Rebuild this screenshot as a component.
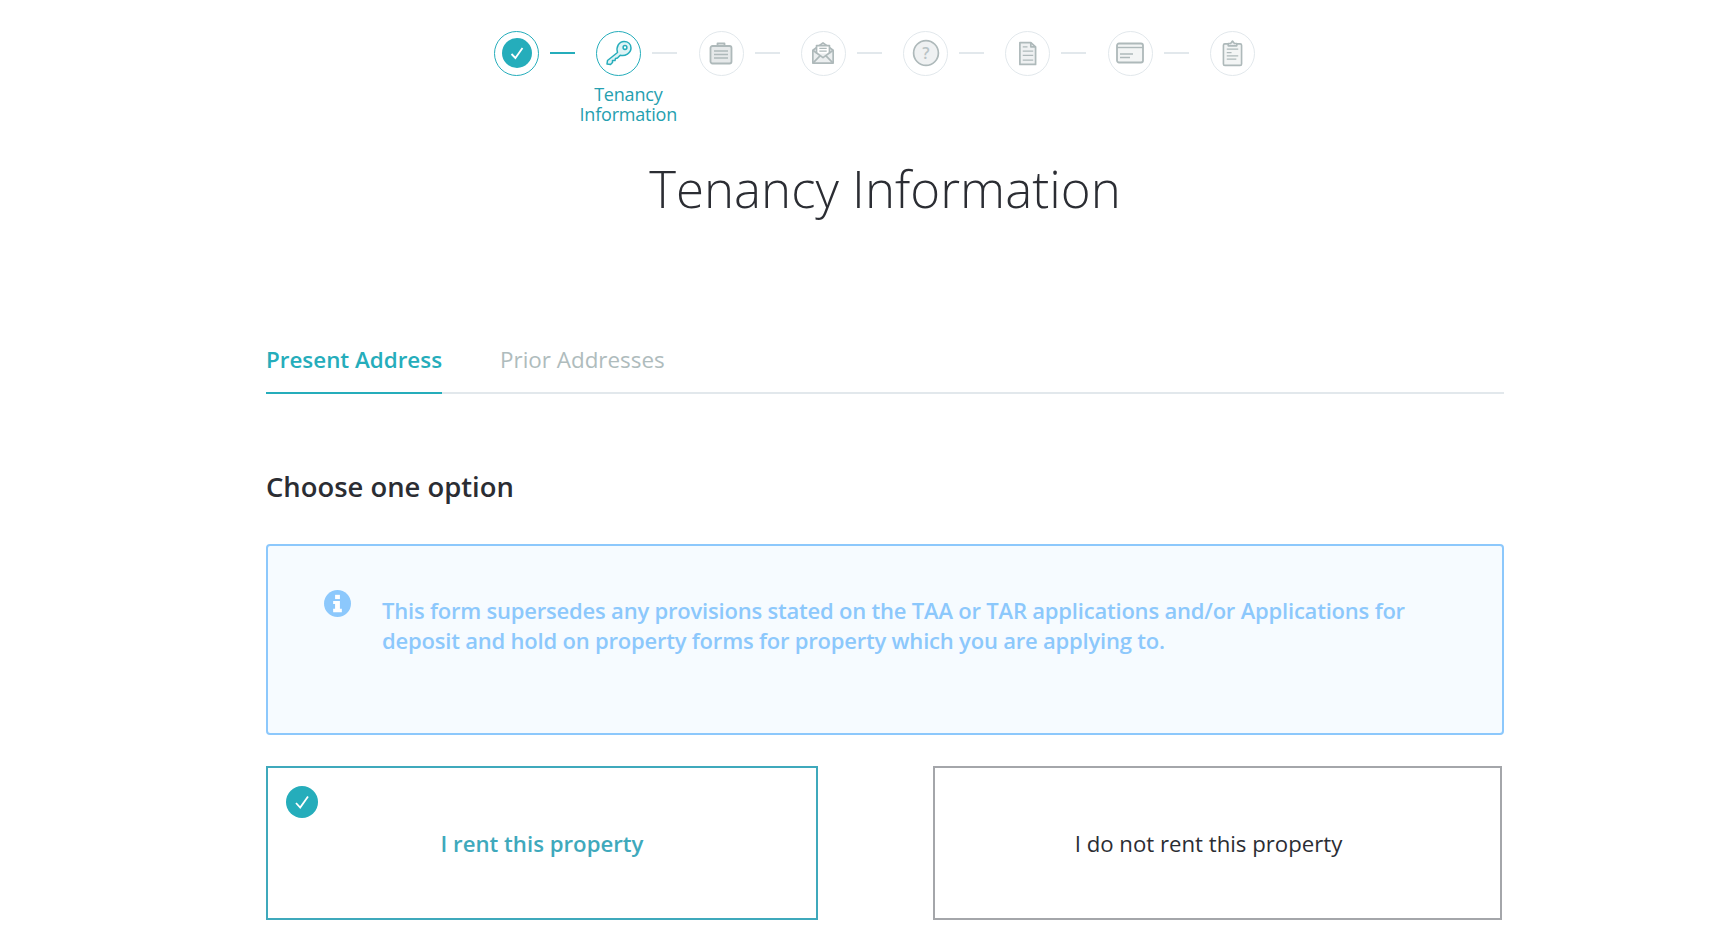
<div class="page">
  <nav class="stepper">
    <div class="step">
      <span class="circle done"><span class="dot">
        <svg viewBox="0 0 30 30" width="30" height="30"><path d="M9.5 16 L13.4 20 L20.5 10" fill="none" stroke="#fff" stroke-width="1.8"/></svg>
      </span></span>
      <span class="line on"></span>
    </div>
    <div class="step">
      <span class="circle active">
        <svg viewBox="0 0 28 28" width="28" height="28" fill="#dff3f5" stroke="#25adbb" stroke-width="1.5" stroke-linejoin="round">
          <path d="M12.5 13.5 L2.5 21.5 L2 25 L5.5 25.5 L7.5 23.5 L7.5 21.5 L10 21.5 L10.5 19.5 L12.5 19 L15.2 16.2 C20 17.8 26 14 26 9 C26 5 23 2.5 19 2.5 C14 2.5 10.8 8 12.5 13.5 Z"/>
          <circle cx="20" cy="8.5" r="1.9" fill="#fff"/>
        </svg>
      </span>
      <span class="line"></span>
      <span class="label">Tenancy<br />Information</span>
    </div>
    <div class="step">
      <span class="circle">
        <svg viewBox="0 0 24 24" width="24" height="24" fill="#e6e9ea" stroke="#aeb9ba" stroke-width="1.8" stroke-linejoin="round">
          <path d="M8.5 5 V2.5 H15.5 V5" fill="none"/>
          <rect x="1.5" y="5" width="21" height="17.5" rx="2"/>
          <path d="M5 10 H19 M5 13.5 H19 M5 17 H19" stroke-width="1.4"/>
        </svg>
      </span>
      <span class="line"></span>
    </div>
    <div class="step">
      <span class="circle">
        <svg viewBox="0 0 26 26" width="24" height="24" fill="#eceff0" stroke="#aeb9ba" stroke-width="1.8" stroke-linejoin="round">
          <path d="M2 10 L13 2 L24 10 V24 H2 Z"/>
          <path d="M6 13.5 V5 H20 V13.5" fill="#fff"/>
          <path d="M9 8 H17 M9 11 H17" stroke-width="1.4"/>
          <path d="M2 10 L13 18 L24 10 M2 24 L10 15.8 M24 24 L16 15.8" fill="none"/>
        </svg>
      </span>
      <span class="line"></span>
    </div>
    <div class="step">
      <span class="circle">
        <svg viewBox="0 0 28 28" width="28" height="28">
          <circle cx="14" cy="14" r="12.4" fill="#eff1f2" stroke="#aeb9ba" stroke-width="1.7"/>
          <text x="14" y="19.5" text-anchor="middle" class="q">?</text>
        </svg>
      </span>
      <span class="line"></span>
    </div>
    <div class="step">
      <span class="circle">
        <svg viewBox="0 0 20 26" width="19" height="25" fill="#eff1f2" stroke="#aeb9ba" stroke-width="1.8" stroke-linejoin="round">
          <path d="M2 1.5 H13.5 L18.5 6 V24.5 H2 Z"/>
          <path d="M13.5 1.5 V6 H18.5" fill="none"/>
          <path d="M5 6 H10 M5 10.5 H16 M5 15 H16 M5 20 H16" stroke-width="1.4"/>
        </svg>
      </span>
      <span class="line"></span>
    </div>
    <div class="step">
      <span class="circle">
        <svg viewBox="0 0 28 22" width="28" height="22" fill="#f3f5f5" stroke="#aeb9ba" stroke-width="1.8">
          <rect x="1" y="1.5" width="26" height="19" rx="2"/>
          <path d="M1 5.5 H27" stroke-width="1.4"/>
          <path d="M4 12 H17 M4 15.5 H14" stroke-width="1.4"/>
        </svg>
      </span>
      <span class="line"></span>
    </div>
    <div class="step">
      <span class="circle">
        <svg viewBox="0 0 22 28" width="21" height="28" fill="#f3f5f5" stroke="#aeb9ba" stroke-width="1.7" stroke-linejoin="round">
          <rect x="1.5" y="4.5" width="19" height="22.5" rx="1.5"/>
          <path d="M6.5 6.5 V4 H9 L11 1.5 L13 4 H15.5 V6.5 Z" fill="#eceef0"/>
          <path d="M5 10 H17 M5 13.5 H10 M5 17 H17 M5 20.5 H15" stroke-width="1.3"/>
        </svg>
      </span>
    </div>
  </nav>

  <h1>Tenancy Information</h1>

  <div class="tabs">
    <button class="tab active">Present Address</button>
    <button class="tab">Prior Addresses</button>
  </div>

  <h2>Choose one option</h2>

  <div class="info">
    <svg class="info-icon" viewBox="0 0 28 28" width="27" height="27">
      <circle cx="14" cy="14" r="14" fill="#8cc8fc"/>
      <rect x="11.5" y="5" width="5" height="4.4" fill="#fff"/>
      <path d="M9.5 11.5 H16.5 V19.5 H18.5 V23 H9.5 V19.5 H11.5 V14.5 H9.5 Z" fill="#fff"/>
    </svg>
    <p>This form supersedes any provisions stated on the TAA or TAR applications and/or Applications for deposit and hold on property forms for property which you are applying to.</p>
  </div>

  <div class="options">
    <button class="card selected">
      <span class="badge">
        <svg viewBox="0 0 32 32" width="32" height="32"><path d="M10 17 L14.2 21.5 L22 10.5" fill="none" stroke="#fff" stroke-width="1.8"/></svg>
      </span>
      I rent this property
    </button>
    <button class="card other">I do not rent this property</button>
  </div>
</div>

<style>
  :global(body) {
    margin: 0;
    background: #fff;
  }
  .page {
    box-sizing: border-box;
    width: 1710px;
    height: 942px;
    overflow: hidden;
    padding: 30px 206px 0 266px;
    font-family: "Open Sans", "Liberation Sans", sans-serif;
  }
  .stepper {
    display: flex;
    margin-left: 228px;
    height: 46px;
  }
  .step {
    position: relative;
    width: 102.3px;
    display: flex;
    align-items: center;
    flex: none;
  }
  .circle {
    box-sizing: border-box;
    width: 45px;
    height: 45px;
    border-radius: 50%;
    border: 1.5px solid #e2e8ec;
    display: flex;
    align-items: center;
    justify-content: center;
    flex: none;
  }
  .circle.done,
  .circle.active {
    border-color: #25adbb;
  }
  .dot,
  .badge {
    border-radius: 50%;
    background: #25adbb;
    display: block;
  }
  .dot {
    width: 30px;
    height: 30px;
  }
  .badge {
    width: 32px;
    height: 32px;
  }
  .dot svg,
  .badge svg {
    display: block;
  }
  .line {
    width: 25px;
    height: 2px;
    margin-left: 11px;
    background: #e2e8ec;
  }
  .line.on {
    background: #25adbb;
  }
  .label {
    position: absolute;
    top: 54px;
    left: -18px;
    width: 100px;
    text-align: center;
    font-size: 18px;
    font-weight: 500;
    letter-spacing: -0.2px;
    line-height: 20px;
    color: #25a0b0;
  }
  .q {
    font: 600 16px "Open Sans", sans-serif;
    fill: #b9c3c5;
  }
  h1 {
    margin: 0;
    padding-top: 78px;
    font-size: 51px;
    font-weight: 300;
    line-height: 68px;
    text-align: center;
    color: #2b2d33;
  }
  .tabs {
    display: flex;
    gap: 58px;
    margin-top: 106px;
    border-bottom: 2px solid #e2e8ec;
    height: 64px;
  }
  .tab {
    margin: 0 0 -2px;
    padding: 0;
    border: 0;
    border-bottom: 2px solid transparent;
    background: none;
    font: 600 22.4px/52px "Open Sans", sans-serif;
    color: #afbcbd;
    height: 66px;
    cursor: pointer;
  }
  .tab:nth-child(2) {
    font-weight: 500;
  }
  .tab.active {
    color: #25adbb;
    border-bottom-color: #25adbb;
  }
  h2 {
    margin: 74px 0 0;
    font-size: 27.4px;
    font-weight: 600;
    line-height: 38px;
    color: #2b2d33;
  }
  .info {
    box-sizing: border-box;
    display: flex;
    align-items: flex-start;
    height: 191px;
    margin-top: 38px;
    padding: 44px 60px 0 56px;
    background: #f6fbff;
    border: 2px solid #8cc8fc;
    border-radius: 4px;
    color: #8cc8fc;
  }
  .info-icon {
    flex: none;
  }
  .info p {
    margin: 5px 0 0 31px;
    font-size: 22px;
    font-weight: 600;
    letter-spacing: -0.2px;
    line-height: 30px;
  }
  .options {
    display: flex;
    margin-top: 31px;
    justify-content: space-between;
  }
  .card {
    position: relative;
    box-sizing: border-box;
    height: 154px;
    border: 2px solid #3fa9bc;
    background: #fff;
    font: 600 22.2px "Open Sans", sans-serif;
    color: #3fa9bc;
    cursor: pointer;
    padding: 0;
  }
  .card.selected {
    width: 552px;
  }
  .card.other {
    width: 569px;
    margin-right: 2px;
    padding-right: 18px;
    border-color: #a4a6aa;
    color: #2b2d33;
    font-weight: 400;
  }
  .badge {
    position: absolute;
    left: 18px;
    top: 18px;
  }
</style>
